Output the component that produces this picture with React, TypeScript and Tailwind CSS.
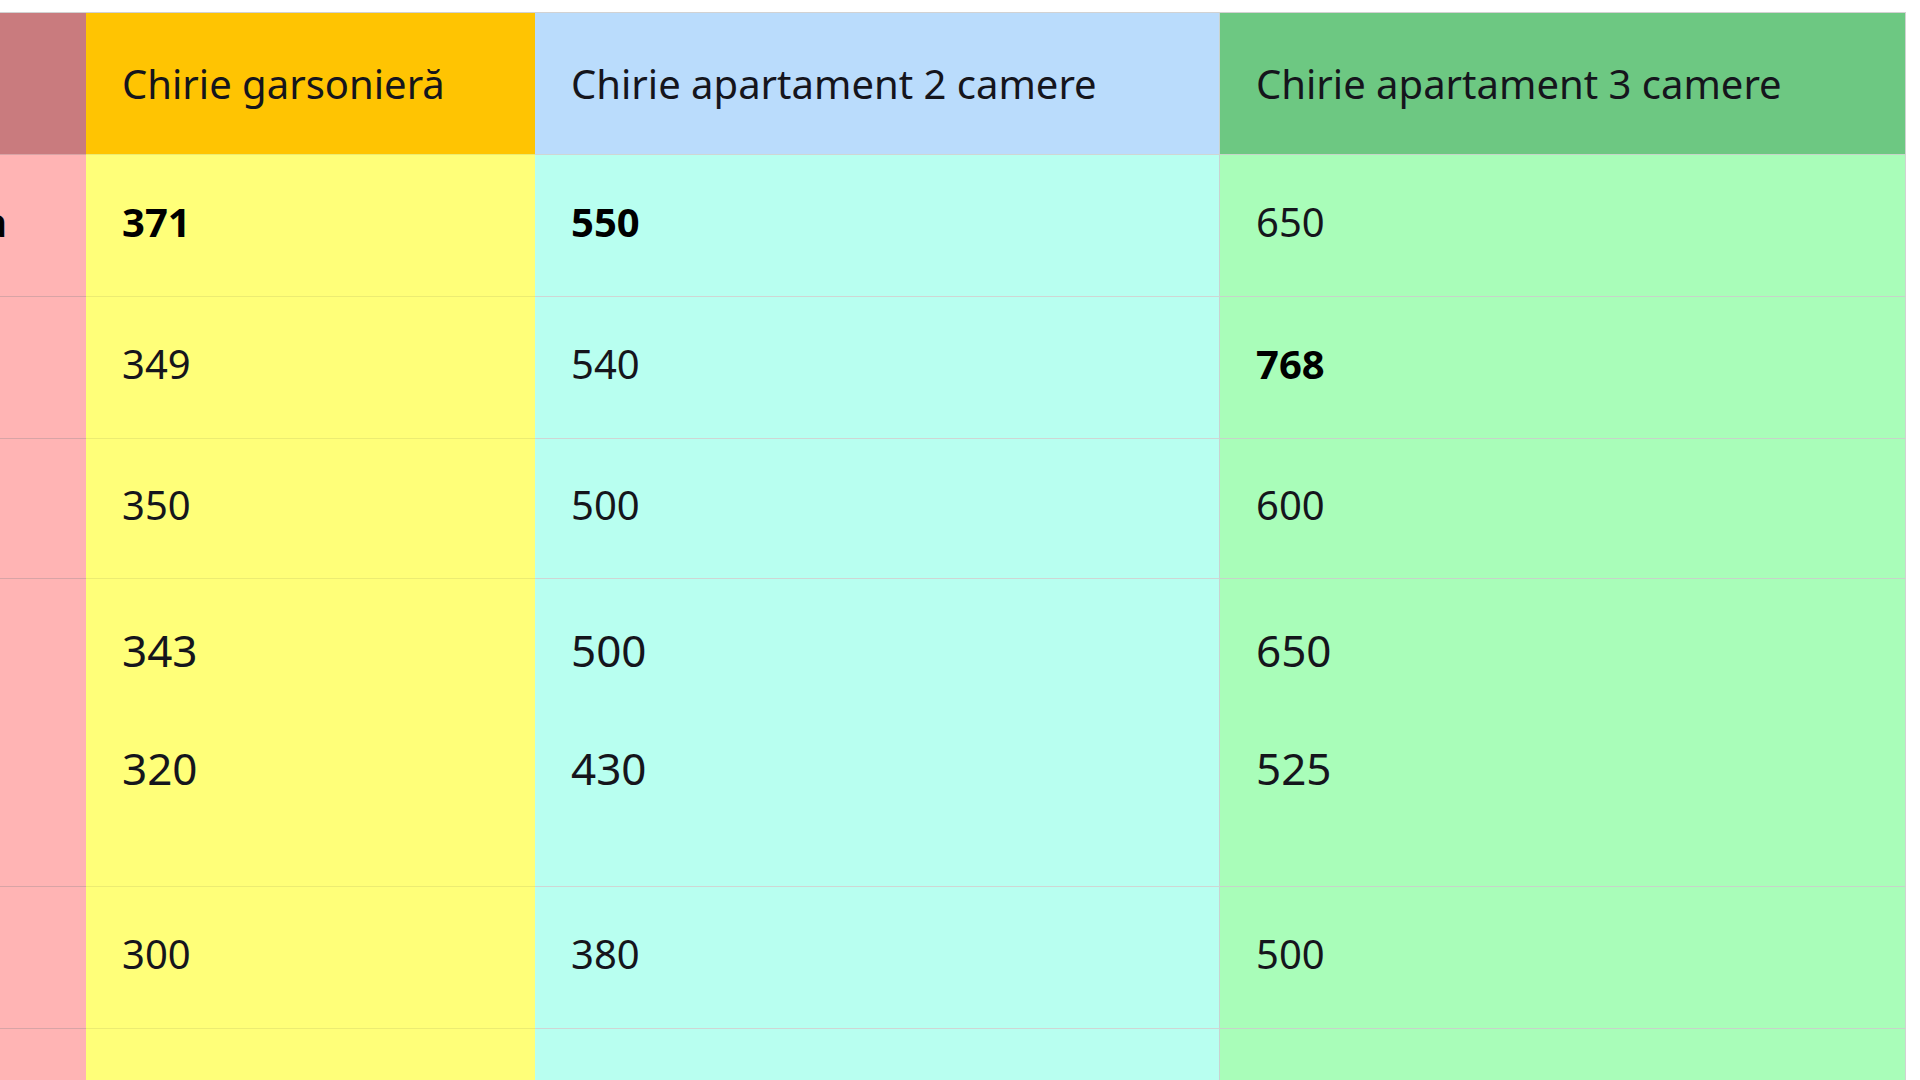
const columns = [
  { title: "Chirie garsonieră", head: "bg-[#ffc402]", body: "bg-[#ffff79]", line: "border-[#ecec72]" },
  { title: "Chirie apartament 2 camere", head: "bg-[#badcfc]", body: "bg-[#b8fff0]", line: "border-[#cfd6d4]" },
  { title: "Chirie apartament 3 camere", head: "bg-[#6dc882]", body: "bg-[#a9fdb9]", line: "border-[#c6d4c8]" },
];

const rows = [
  { city: "Cluj-Napoca", values: [["371"], ["550"], ["650"]], bold: [true, true, false], h: "h-[142px]" },
  { city: "", values: [["349"], ["540"], ["768"]], bold: [false, false, true], h: "h-[142px]" },
  { city: "", values: [["350"], ["500"], ["600"]], bold: [false, false, false], h: "h-[140px]" },
  { city: "", values: [["343", "320"], ["500", "430"], ["650", "525"]], bold: [false, false, false], h: "h-[308px]", big: true },
  { city: "", values: [["300"], ["380"], ["500"]], bold: [false, false, false], h: "h-[142px]" },
  { city: "", values: [["290"], ["370"], ["450"]], bold: [false, false, false], h: "h-[142px]" },
];

function Cell({ vals, bold, big }: { vals: string[]; bold: boolean; big?: boolean }) {
  if (big) {
    return (
      <div className="flex flex-col gap-[74px] pt-[49px] pl-[36px] text-[44px] leading-[44px]">
        {vals.map((v) => (
          <p key={v}>{v}</p>
        ))}
      </div>
    );
  }
  return (
    <div className={`flex h-full items-center pb-[7px] pl-[36px] text-[40px] ${bold ? "font-bold text-black" : ""}`}>
      {vals[0]}
    </div>
  );
}

export default function App() {
  return (
    <div className="h-[1080px] w-[1920px] overflow-hidden bg-white font-['Noto_Sans',sans-serif] text-[#15151c]">
      <div className="mt-[12px] w-[1906px] border-t border-r border-[#d2d2d2]">
        {/* header */}
        <div className="grid h-[141px] grid-cols-[86px_449px_685px_1fr]">
          <div className="bg-[#c97b7e]" />
          {columns.map((c, i) => (
            <div
              key={c.title}
              className={`flex items-center pl-[36px] text-[40px] ${c.head} ${i === 1 ? "border-r border-[#c9d3d0]" : ""}`}
            >
              {c.title}
            </div>
          ))}
        </div>

        {/* body */}
        {rows.map((r, ri) => (
          <div key={ri} className={`grid grid-cols-[86px_449px_685px_1fr] ${r.h}`}>
            <div className="relative overflow-hidden border-t border-[#d8a4a6] bg-[#ffb4b4]">
              {r.city && (
                <div className="flex h-full w-[400px] -ml-[393px] items-center justify-end pb-[7px] text-[40px] font-bold text-black whitespace-nowrap">
                  {r.city}
                </div>
              )}
            </div>
            {columns.map((c, ci) => (
              <div
                key={ci}
                className={`border-t ${c.line} ${c.body} ${ci === 1 ? "border-r border-r-[#c9d3d0]" : ""}`}
              >
                <Cell vals={r.values[ci]} bold={r.bold[ci]} big={r.big} />
              </div>
            ))}
          </div>
        ))}
      </div>
    </div>
  );
}
